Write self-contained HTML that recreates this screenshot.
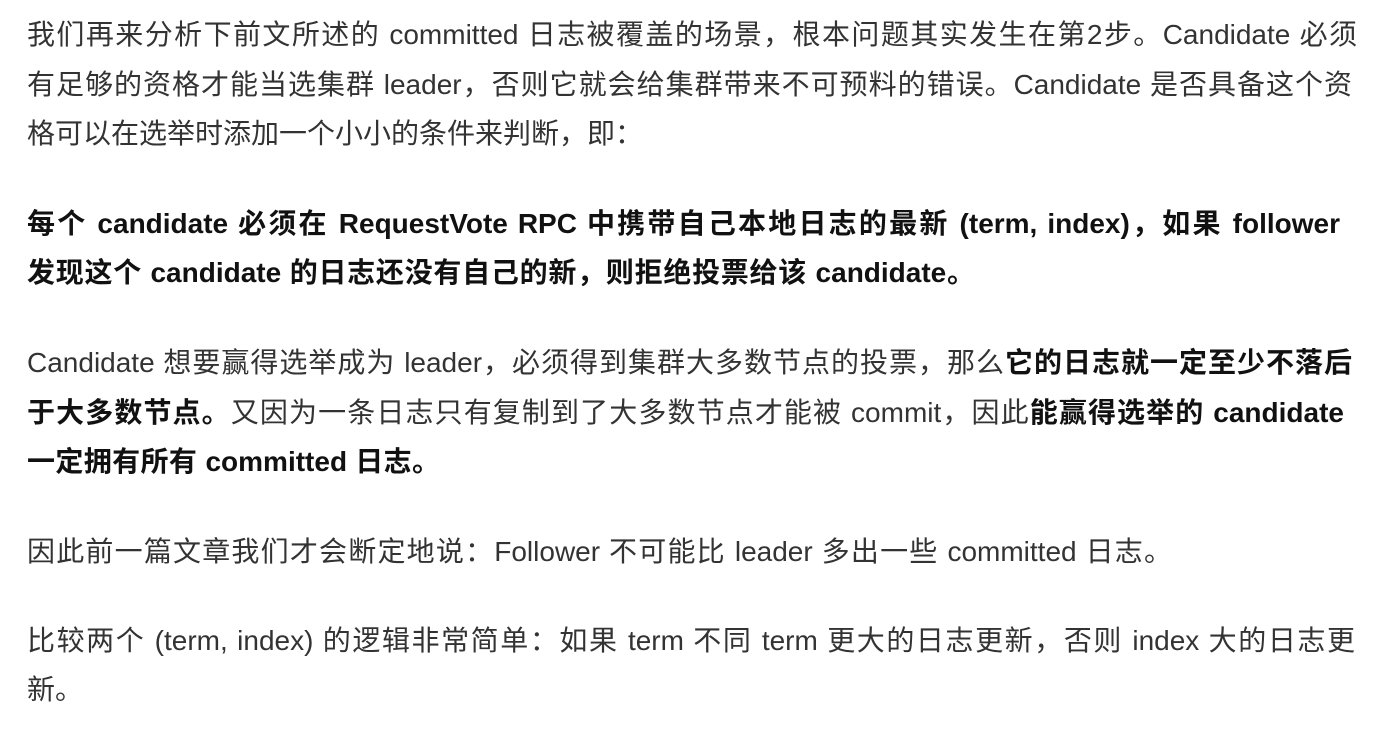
<!DOCTYPE html>
<html><head><meta charset="utf-8"><style>
html,body{margin:0;padding:0;background:#fff;width:1385px;height:730px;overflow:hidden}
.l{position:absolute;left:27px;height:49px;line-height:49px;font-size:28px;white-space:nowrap;color:#333;font-family:"Liberation Sans","Noto Sans CJK SC",sans-serif}
.j{text-align:justify;text-align-last:justify}
b{color:#111;font-weight:bold}
</style></head><body>
<div class="l j" style="top:10px;width:1330px">我们再来分析下前文所述的 committed 日志被覆盖的场景，根本问题其实发生在第2步。Candidate 必须</div>
<div class="l j" style="top:60px;width:1325px">有足够的资格才能当选集群 leader，否则它就会给集群带来不可预料的错误。Candidate 是否具备这个资</div>
<div class="l" style="top:109px">格可以在选举时添加一个小小的条件来判断，即：</div>
<div class="l j" style="top:199px;width:1313px"><b>每个 candidate 必须在 RequestVote RPC 中携带自己本地日志的最新 (term, index)，如果 follower</b></div>
<div class="l j" style="top:248px;width:948px"><b>发现这个 candidate 的日志还没有自己的新，则拒绝投票给该 candidate。</b></div>
<div class="l j" style="top:338px;width:1325px">Candidate 想要赢得选举成为 leader，必须得到集群大多数节点的投票，那么<b>它的日志就一定至少不落后</b></div>
<div class="l j" style="top:388px;width:1317px"><b>于大多数节点。</b>又因为一条日志只有复制到了大多数节点才能被 commit，因此<b>能赢得选举的 candidate</b></div>
<div class="l j" style="top:437px;width:413px"><b>一定拥有所有 committed 日志。</b></div>
<div class="l j" style="top:527px;width:1145px">因此前一篇文章我们才会断定地说：Follower 不可能比 leader 多出一些 committed 日志。</div>
<div class="l j" style="top:616px;width:1328px">比较两个 (term, index) 的逻辑非常简单：如果 term 不同 term 更大的日志更新，否则 index 大的日志更</div>
<div class="l" style="top:665px">新。</div>
</body></html>
